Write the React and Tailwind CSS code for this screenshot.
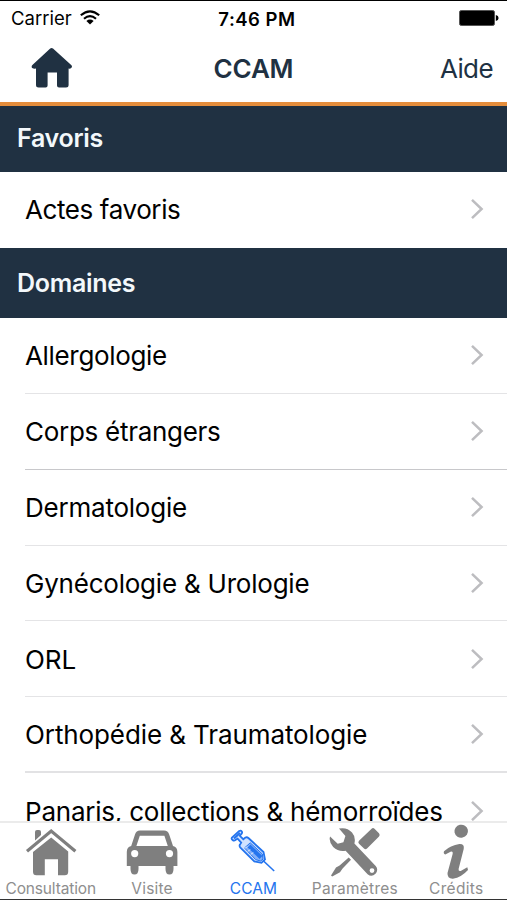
import React from 'react';

const domaines = [
  { id: 1, label: 'Allergologie', text: 'tracking-[-0.33px]', line: 'border-b border-[#e4e4e6]' },
  { id: 2, label: 'Corps étrangers', text: 'tracking-[-0.28px]', line: 'border-b border-[#c8c8cb]' },
  { id: 3, label: 'Dermatologie', text: 'tracking-[-0.22px]', line: 'border-b border-[#e4e4e6]' },
  { id: 4, label: 'Gynécologie & Urologie', text: 'tracking-[-0.22px]', line: 'border-b border-[#e4e4e6]' },
  { id: 5, label: 'ORL', text: 'tracking-[-0.1px]', line: 'border-b border-[#e4e4e6]' },
  { id: 6, label: 'Orthopédie & Traumatologie', text: 'tracking-[-0.1px]', line: 'border-b-2 border-[#e2e2e4]' },
  { id: 7, label: 'Panaris, collections & hémorroïdes', text: 'tracking-[-0.22px]', line: 'border-b border-[#e4e4e6]' },
];

const tabs = [
  { id: 'consultation', label: 'Consultation', Icon: HouseIcon, text: 'tracking-[-0.15px]' },
  { id: 'visite', label: 'Visite', Icon: CarIcon, text: 'tracking-[0.2px]' },
  { id: 'ccam', label: 'CCAM', Icon: SyringeIcon, text: 'tracking-[0.1px]' },
  { id: 'parametres', label: 'Paramètres', Icon: ToolsIcon, text: 'tracking-[0.25px]' },
  { id: 'credits', label: 'Crédits', Icon: InfoIcon, text: 'tracking-[0.3px]' },
];

function HomeIcon() {
  return (
    <svg width="42" height="41" viewBox="0 0 42 41" fill="#203142">
      <path d="M19.2 .6 Q20.6 -.6 22 .6 L40.2 17 Q41.8 18.6 40.2 20 Q39.2 21 37.6 20.6 V36.9 Q37.6 39.4 35 39.4 H28 Q26 39.4 26 37.4 V24.4 H16.6 V37.4 Q16.6 39.4 14.6 39.4 H7.6 Q5 39.4 5 36.9 V20.6 Q2.6 21 1.2 20 Q0 18.6 1.4 17 Z" />
    </svg>
  );
}

function WifiIcon() {
  return (
    <svg width="20" height="15" viewBox="0 0 20 15" fill="none" stroke="#000" strokeWidth="2.1" className="-mt-0.5">
      <path d="M.8 5.3 Q10 -2.6 19.2 5.3" />
      <path d="M4 8.8 Q10 3.6 16 8.8" />
      <path d="M10 14.4 L6.4 11 Q10 8.2 13.6 11 Z" fill="#000" stroke="none" />
    </svg>
  );
}

function BatteryIcon() {
  return (
    <svg width="40" height="16" viewBox="0 0 40 16" className="-mt-0.5">
      <rect x=".5" y=".5" width="35" height="15" rx="1.8" fill="#000" stroke="#555" />
      <path d="M36.8 5 Q39.6 5.6 39.6 8 Q39.6 10.4 36.8 11 Z" fill="#000" />
    </svg>
  );
}

function Chevron() {
  return (
    <svg width="14" height="22" viewBox="0 0 14 22" fill="none" stroke="#bdbdc0" strokeWidth="2.5" className="-mt-px">
      <path d="M2 1.8 L11.6 11 L2 20.2" />
    </svg>
  );
}

function HouseIcon() {
  return (
    <svg width="52" height="56" viewBox="0 0 52 56" fill="#7f7f7f">
      <path d="M10 17 V9 Q10 7 12 7 H14 Q16 7 16 9 V12 L10 17.5 Z" />
      <path d="M2 28.2 L26.2 8 L50.4 28.2" fill="none" stroke="#7f7f7f" strokeWidth="3.2" />
      <path d="M26.2 14.4 L43.2 28.4 V48.7 Q43.2 52.2 39.7 52.2 H33 V36.3 H19.8 V52.2 H11.4 Q8 52.2 8 48.7 V29 Z" />
    </svg>
  );
}

function CarIcon() {
  return (
    <svg width="52" height="56" viewBox="0 0 52 56" fill="#7f7f7f">
      <path
        fillRule="evenodd"
        d="M14 7.6 H38 Q42 7.6 43.2 11.5 L47 23 Q51.4 24.2 51.4 29 V43 H47.5 V46 Q47.5 51.5 43.5 51.5 Q39.5 51.5 39.5 46 V43 H12.5 V46 Q12.5 51.5 8.5 51.5 Q4.5 51.5 4.5 46 V43 H.8 V29 Q.8 24.2 5.2 23 L9 11.5 Q10.2 7.6 14 7.6 Z M13.8 12.8 L10.4 23 H41.8 L38.4 12.8 Z M8.7 27 A3.6 3.6 0 1 0 8.7 34.2 A3.6 3.6 0 1 0 8.7 27 Z M43.5 27 A3.6 3.6 0 1 0 43.5 34.2 A3.6 3.6 0 1 0 43.5 27 Z"
      />
    </svg>
  );
}

function SyringeIcon() {
  return (
    <svg width="52" height="56" viewBox="0 0 52 56" fill="none" stroke="#2474ee">
      <path d="M5.6 17 Q4 16 5 14.5 L12.2 8 Q13.8 7 14.8 8.5 Q15.6 9.8 14.4 11 L12.8 12.8 L16.3 16.2 L18.4 14.5 Q20 13.8 21.4 15 L36.5 29 L38 36.5 L34.5 39.8 L27.3 38.5 L13.4 24.7 Q12 23 13 21.6 L14.2 19.6 L10.6 15.6 L8.4 17.1 Q7 18.2 5.6 17 Z" fill="#cfe1ff" strokeWidth="1.8" />
      <path d="M7 15.5 L13 10" strokeWidth="2" />
      <path d="M17.5 25 L23.2 19.8 L35.3 31 L36 36.2 L33.5 38 L28.6 36.6 Z" fill="#85b0f8" strokeWidth="1" />
      <path d="M22 23 L34 34.5" strokeWidth="4" />
      <path d="M18 25.5 L20 23.5 M21 28.5 L23 26.5 M24 31.5 L26 29.5" strokeWidth="1" stroke="#fff" />
      <path d="M36 37.5 L47.2 48" strokeWidth="1.6" />
    </svg>
  );
}

function ToolsIcon() {
  return (
    <svg width="52" height="56" viewBox="0 0 52 56" fill="#7f7f7f">
      <path d="M42.6 5.7 Q44 4.4 45.5 5.7 L50 10.3 Q51.4 12 50 13.4 L38 25.6 Q36.5 26.9 35 25.6 L30 20.8 Q28.6 19.2 30 17.8 Z" />
      <path d="M19.7 34.4 L22 36.7 L13.6 45.6 L11 49.2 L3.2 53.6 L2 52.4 L7 44.4 L10.6 42.4 Z" />
      <path
        fillRule="evenodd"
        d="M10 5.6 Q18 4 23 9.5 Q27 14 25.4 20.4 L46.7 43 Q49.8 46.7 46.5 50.8 Q42.6 54.6 38.6 51.2 L16.6 27.7 Q9.4 29 4.2 23.9 Q-.6 18.5 1.1 13.4 L8.7 20.8 L14.4 19.2 L16.4 13 Z M43 45.2 A2.4 2.4 0 1 0 43 50 A2.4 2.4 0 1 0 43 45.2 Z"
      />
    </svg>
  );
}

function InfoIcon() {
  return (
    <svg width="52" height="56" viewBox="0 0 52 56" fill="#7f7f7f">
      <ellipse cx="31.2" cy="8.2" rx="6.8" ry="6.5" transform="rotate(-12 31.2 8.2)" />
      <path d="M14 28.2 Q20.5 22.2 29.4 21 Q34.7 20.7 33.7 26 L28.6 46.1 Q28.3 48.7 30.7 47.9 L37.3 44.3 L38 47 Q31.2 54.5 23 55.7 Q17.1 55.9 17.5 50 L22.7 30.7 Q23.2 28 20.5 28.8 L15.3 31.4 Q13.1 30.7 14 28.2 Z" />
    </svg>
  );
}

function SectionHeader({ title, className }) {
  return (
    <div className={`shrink-0 bg-[#203142] text-[#f3f8fb] text-[25px] font-semibold tracking-[-0.3px] pl-[17px] leading-[30px] ${className}`}>
      {title}
    </div>
  );
}

function Row({ label, text, line }) {
  return (
    <div className="h-[75.9px] shrink-0 pl-[25px]">
      <div className={`h-full flex items-center justify-between pr-[23px] pt-px ${line}`}>
        <span className={`text-[26px] leading-8 pt-px whitespace-nowrap text-black ${text}`}>{label}</span>
        <Chevron />
      </div>
    </div>
  );
}

export default function App() {
  return (
    <div className="w-[507px] h-[900px] flex flex-col overflow-hidden bg-white border-t border-b border-t-black border-b-[#333] font-['Inter','Liberation_Sans',sans-serif]">
      <div className="h-[35px] shrink-0 grid grid-cols-3 items-center pl-[11px] pr-[8px] text-black">
        <div className="flex items-center gap-2">
          <span className="text-[18.5px] leading-6 -mt-0.5">Carrier</span>
          <WifiIcon />
        </div>
        <span className="text-center text-[18.5px] leading-6 font-semibold tracking-[0.5px] pl-1">7:46 PM</span>
        <div className="flex justify-end">
          <BatteryIcon />
        </div>
      </div>

      <div className="h-[70px] shrink-0 grid grid-cols-[1fr_auto_1fr] items-center pl-[31px] pr-[14px] pb-[2px] border-b-4 border-[#e48d3c] text-[#203142] text-[26px]">
        <HomeIcon />
        <h1 className="text-center font-semibold tracking-[-0.2px] mr-[17px]">CCAM</h1>
        <span className="text-right tracking-[-0.6px]">Aide</span>
      </div>

      <div className="flex-1 min-h-0 flex flex-col overflow-hidden">
        <SectionHeader title="Favoris" className="h-[66px] pt-[17px]" />
        <Row label="Actes favoris" text="tracking-[-0.4px]" line="border-b border-transparent" />
        <SectionHeader title="Domaines" className="h-[70px] pt-[20px]" />
        {domaines.map((item) => (
          <Row key={item.id} label={item.label} text={item.text} line={item.line} />
        ))}
      </div>

      <div className="h-[78px] shrink-0 grid grid-cols-5 border-t-2 border-[#ebebeb]">
        {tabs.map(({ id, label, Icon, text }) => (
          <div key={id} className="flex flex-col items-center">
            <Icon />
            <span className={`text-[15.5px] leading-5 whitespace-nowrap ${text} ${id === 'ccam' ? 'text-[#2474ee]' : 'text-[#8e8e8e]'}`}>
              {label}
            </span>
          </div>
        ))}
      </div>
    </div>
  );
}
